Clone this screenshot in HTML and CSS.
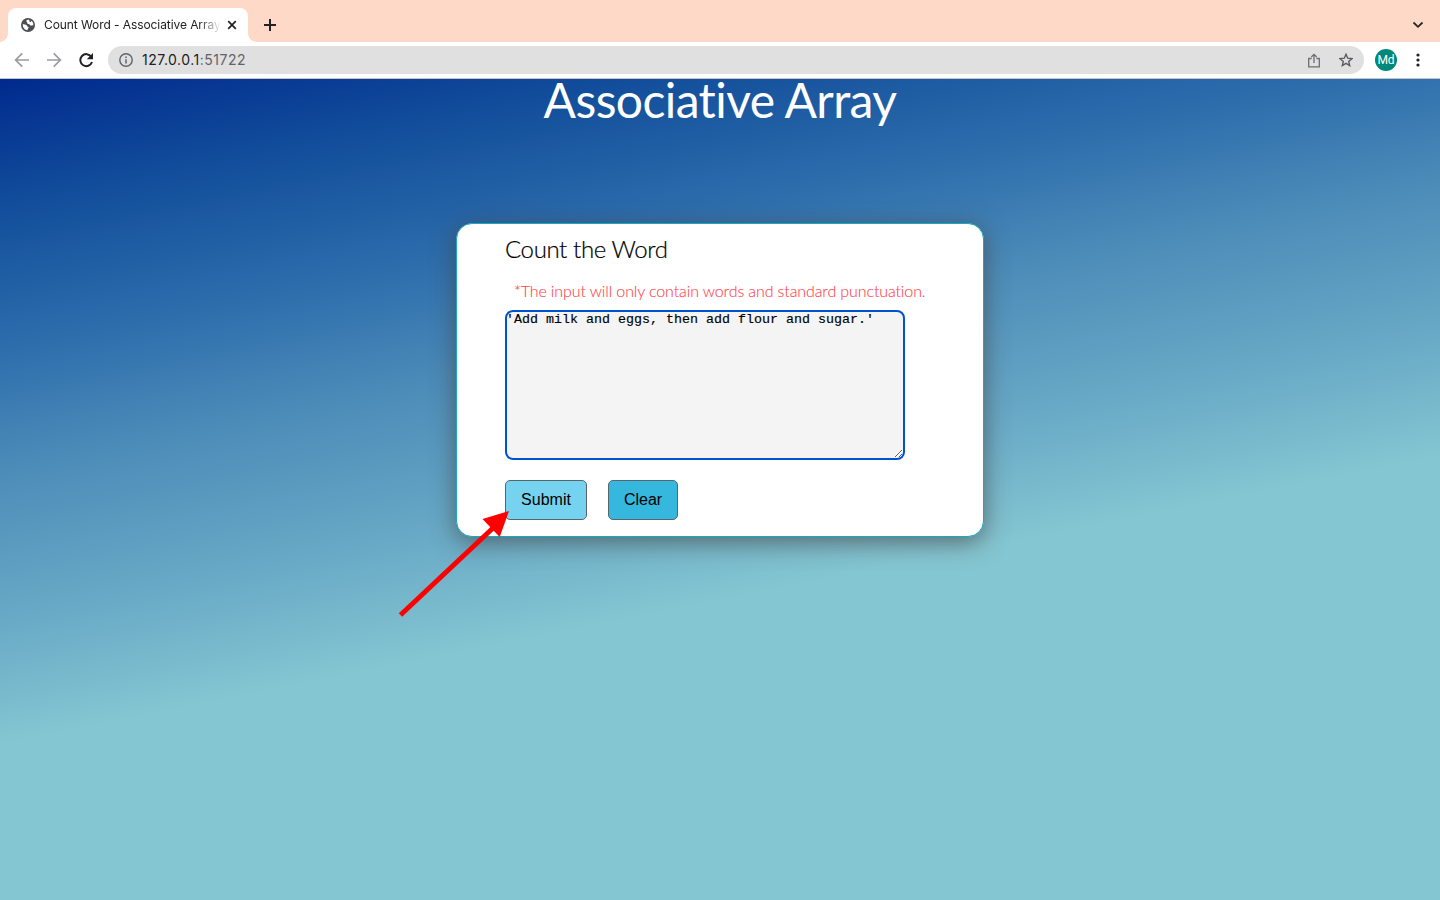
FILE: index.html
```html
<!DOCTYPE html>
<html lang="en">
<head>
<meta charset="utf-8">
<title>Count Word - Associative Array</title>
<link rel="stylesheet" href="styles.css">
</head>
<body>
<header class="tabs">
  <div class="tab">
    <svg class="globe" width="14" height="14" viewBox="0 0 14 14"><circle cx="7" cy="7" r="7" fill="#4c4e54"/><path d="M1.700 6.200c1.300-.2 2.600.1 3.700.8.900.6.600 1.400 1.500 1.700.8.200.9.900.4 1.600-.4.500-.8.900-.7 1.900C3.900 12 1.700 9.700 1.700 6.200zM8.200 1.800c-1.700-.1-2.900.5-3 1.300-.1 1 1.100.7 1 1.600-.1.900.6 1.300 1.500 1.300 1.100 0 1 1.300 2 1.500.9.200 1.600-.3 2.600-.2.200-2.100-.7-3.600-1.900-4.500-.2.800-.8 1.400-1.500 1.200-.8-.3-.2-1.400-.7-2.200z" fill="#fff"/></svg>
    <span class="tab-title">Count Word - Associative Array</span>
    <svg width="10" height="10" viewBox="0 0 10 10"><path d="M1.200 1.200l7.600 7.600M8.800 1.200L1.200 8.800" stroke="#202124" stroke-width="1.700"/></svg>
  </div>
  <svg class="plus" width="14" height="14" viewBox="0 0 14 14"><path d="M7 1v12M1 7h12" stroke="#202124" stroke-width="2"/></svg>
  <svg class="chevron" width="12" height="8" viewBox="0 0 12 8"><path d="M1.500 1.500L6 5.800l4.500-4.300" fill="none" stroke="#2b2525" stroke-width="1.800"/></svg>
</header>
<nav class="toolbar">
  <svg width="16" height="16" viewBox="0 0 16 16"><path d="M15 8H2M8.300 1.300L1.600 8l6.700 6.700" fill="none" stroke="#9b9c9f" stroke-width="1.700"/></svg>
  <svg width="16" height="16" viewBox="0 0 16 16"><path d="M1 8h13M7.700 1.300L14.400 8l-6.700 6.700" fill="none" stroke="#9b9c9f" stroke-width="1.700"/></svg>
  <svg width="16" height="16" viewBox="0 0 16 16"><path d="M13.300 4.800A6 6 0 1 0 14 10" fill="none" stroke="#202124" stroke-width="2"/><path d="M15 1v6.200H8.800z" fill="#202124"/></svg>
  <div class="address">
    <svg width="14" height="14" viewBox="0 0 14 14"><circle cx="7" cy="7" r="6.200" fill="none" stroke="#5f6368" stroke-width="1.400"/><path d="M7 6.200v4.300M7 3.500v1.500" stroke="#5f6368" stroke-width="1.500"/></svg>
    <span class="url">127.0.0.1<span class="port">:51722</span></span>
    <svg class="share" width="12" height="15" viewBox="0 0 12 15"><path d="M3.600 5.500H.7v8.300h10.600V5.500H8.400M6 10V1.500M3.300 4L6 1.300 8.700 4" fill="none" stroke="#6c6e72" stroke-width="1.300"/></svg>
    <svg width="14" height="14" viewBox="0 0 14 14"><path d="M7 1.200l1.700 4 4.300.4-3.300 2.800 1 4.200L7 10.400l-3.700 2.200 1-4.200L1 5.600l4.300-.4z" fill="none" stroke="#5a5c60" stroke-width="1.400"/></svg>
  </div>
  <div class="avatar">Md</div>
  <svg class="menu" width="4" height="14" viewBox="0 0 4 14" fill="#202124"><circle cx="2" cy="2" r="1.600"/><circle cx="2" cy="7" r="1.600"/><circle cx="2" cy="12" r="1.600"/></svg>
</nav>
<main class="page">
  <h1 class="title">Associative Array</h1>
  <section class="card">
    <h2 class="heading">Count the Word</h2>
    <p class="note">*The input will only contain words and standard punctuation.</p>
    <textarea class="input" spellcheck="false">'Add milk and eggs, then add flour and sugar.'</textarea>
    <div class="actions">
      <button class="button submit">Submit</button>
      <button class="button clear">Clear</button>
    </div>
  </section>
  <svg class="arrow" width="112" height="108" viewBox="0 0 112 108"><path d="M2.500 105L95 18" stroke="#f00" stroke-width="5"/><path d="M111 1L84.500 9l17.200 18z" fill="#f00"/></svg>
</main>
</body>
</html>
```
FILE: styles.css
```css
* { box-sizing: border-box; }
body { margin: 0; height: 900px; display: flex; flex-direction: column; overflow: hidden; font-family: Inter, sans-serif; }
svg { flex: none; display: block; }
.tabs { height: 42px; background: #ffd9c7; display: flex; align-items: flex-end; padding: 0 16px 0 8px; }
.tab { position: relative; width: 240px; height: 34px; background: #fff; border-radius: 8px 8px 0 0; display: flex; align-items: center; padding: 0 11px 0 13px; }
.tab::before, .tab::after { content: ""; position: absolute; bottom: 0; width: 8px; height: 8px; }
.tab::before { left: -8px; background: radial-gradient(circle at 0 0, #ffd9c7 7.500px, #fff 8px); }
.tab::after { right: -8px; background: radial-gradient(circle at 100% 0, #ffd9c7 7.500px, #fff 8px); }
.tab-title { width: 176px; margin: 0 7px 0 9px; white-space: nowrap; font-size: 12px; line-height: 16px; letter-spacing: -.080px; color: #202124; -webkit-mask-image: linear-gradient(to right, #000 155px, transparent 177px); mask-image: linear-gradient(to right, #000 155px, transparent 177px); }
.plus { margin: 0 auto 10px 15px; }
.chevron { margin-bottom: 13px; }
.toolbar { height: 37px; background: #fff; border-bottom: 1px solid #c5c5c5; display: flex; align-items: center; gap: 16px; padding: 0 20px 0 14px; }
.address { flex: 1; height: 28px; margin: 0 -5px 0 -2px; border-radius: 14px; background: #e0e0e0; display: flex; align-items: center; padding: 0 11px; }
.url { margin: 0 auto 0 9px; font-size: 14px; line-height: 20px; letter-spacing: .5px; color: #202124; }
.port { color: #5f6368; }
.share { margin-right: 19px; }
.avatar { width: 22px; height: 22px; border-radius: 50%; background: #00897b; color: #fff; font: 12px/22px Roboto, sans-serif; text-align: center; }
.menu { margin-left: 3px; }
.page { position: relative; flex: 1; background: linear-gradient(168.700deg, #002a8e, #124e9b 11.700%, #2f6fad 25%, #4b8bb8 35%, #6aabc7 49.600%, #84c6d1 60%); display: flex; flex-direction: column; align-items: center; font-family: Lato, sans-serif; font-variant-ligatures: none; }
.title { margin: 0; height: 144px; font-size: 48px; line-height: 41px; font-weight: 400; letter-spacing: -.6px; color: #fff; white-space: nowrap; }
.card { width: 528px; height: 314px; background: #fff; border: 1px solid #16aabd; border-radius: 16px; box-shadow: 0 5px 25px rgba(70, 70, 70, .7); padding: 0 48px; }
.heading { margin: 0; padding-top: 10px; height: 54px; font-size: 24px; line-height: 30px; font-weight: 300; letter-spacing: -.38px; color: #000; white-space: nowrap; -webkit-text-stroke: .2px #000; }
.note { margin: 0 0 0 9px; height: 32px; padding-top: 2px; font-size: 16px; line-height: 22px; font-weight: 300; letter-spacing: -.11px; color: #ff4047; white-space: nowrap; -webkit-text-stroke: .1px #ff4047; }
.input { display: block; width: 400px; height: 150px; padding: 0; border: 2px solid #0052d4; border-radius: 8px; background: #f4f4f4; color: #000; font: 13.333px/15px "Liberation Mono", monospace; text-indent: -1px; outline: none; white-space: pre; overflow: hidden; -webkit-text-stroke: .15px #000; }
.actions { display: flex; gap: 21px; margin-top: 20px; }
.button { height: 40px; padding: 0; border: 1px solid #56666c; border-radius: 5px; font: 16px "Liberation Sans", Arial, sans-serif; color: #000; }
.submit { width: 82px; background: #76d3f0; }
.clear { width: 70px; background: #36b7dd; }
.arrow { position: absolute; left: 398px; top: 431px; }
```
